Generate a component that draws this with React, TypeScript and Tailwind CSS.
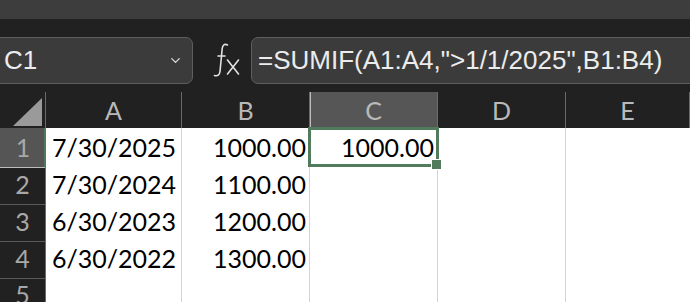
import { ChevronDown } from 'lucide-react'

const COLS = ['A', 'B', 'C', 'D', 'E']
const ROWS: [string, string, string][] = [
  ['7/30/2025', '1000.00', '1000.00'],
  ['7/30/2024', '1100.00', ''],
  ['6/30/2023', '1200.00', ''],
  ['6/30/2022', '1300.00', ''],
  ['', '', ''],
]

const GRID = 'grid grid-cols-[46px_136px_128px_128px_128px_1fr]'

function FxIcon() {
  return (
    <svg width="28" height="34" viewBox="0 0 28 34" fill="none" stroke="#e2e2e2" strokeWidth="1.6" strokeLinecap="round">
      <path d="M15.5 2 C12.5 0.5 10.6 2 10.2 5.5 L8 28.5 C7.6 32 5.5 33.5 2.5 32.5" />
      <path d="M6 13 H13" />
      <path d="M15.5 17 L26.5 31 M26.5 17 L15.5 31" />
    </svg>
  )
}

export default function App() {
  return (
    <div className="w-[690px] h-[302px] overflow-hidden bg-[#212121] flex flex-col">
      {/* Ribbon edge */}
      <div className="h-[19px] bg-[#3d3d3d] shrink-0" />

      {/* Formula bar */}
      <div className="flex items-center h-[48px] mt-[17px] shrink-0">
        <div className="ml-[-8px] w-[201px] h-[47px] rounded-[7px] border border-[#5e5e5e] bg-[#3b3b3b] flex items-center pl-[11px] pr-[9px]">
          <span className="flex-1 text-[26px] text-[#ececec] font-['Liberation_Sans',sans-serif]">C1</span>
          <ChevronDown size={15} strokeWidth={2.2} className="text-[#d8d8d8]" />
        </div>
        <div className="w-[58px] flex items-center justify-center pl-[7px] pb-[1px]">
          <FxIcon />
        </div>
        <div className="flex-1 mr-[-10px] h-[47px] rounded-[7px] border border-[#5e5e5e] bg-[#3b3b3b] flex items-center pl-[6px]">
          <span className="text-[26px] text-[#ececec] font-['Liberation_Sans',sans-serif] whitespace-nowrap">
            =SUMIF(A1:A4,"&gt;1/1/2025",B1:B4)
          </span>
        </div>
      </div>

      {/* Sheet */}
      <div className="relative mt-[8px] font-['Lato',sans-serif]">
        <div className={`${GRID} h-[36px]`}>
          <div className="border-r border-[#6a6a6a] flex items-end justify-end pr-[3px] pb-[4px]">
            <div className="w-0 h-0 border-l-[29px] border-l-transparent border-b-[28px] border-b-[#9a9a9a]" />
          </div>
          {COLS.map((c) => (
            <div
              key={c}
              className={`flex items-center justify-center text-[25px] text-[#b9b9b9] border-r ${
                c === 'C' ? 'bg-[#565656] border-[#6a6a6a] shadow-[inset_1px_0_0_#bdbdbd]' : 'border-[#6a6a6a]'
              }`}
            >
              {c}
            </div>
          ))}
        </div>

        {ROWS.map((row, i) => (
          <div key={i} className={`${GRID} h-[37px]`}>
            <div
              className={`flex items-center justify-center text-[25px] text-[#a8a8a8] border-b ${
                i === 0
                  ? 'bg-[#555555] border-[#bdbdbd] shadow-[inset_-2px_0_0_#4f7a5a]'
                  : 'border-[#5a5a5a] border-r border-r-[#6a6a6a]'
              }`}
            >
              {i + 1}
            </div>
            <div className="bg-white border-r border-b border-[#d4d4d4] flex items-center pl-[6px] pt-[1px] text-[25px] text-black">
              {row[0]}
            </div>
            <div className="bg-white border-r border-b border-[#d4d4d4] flex items-center justify-end pr-[3px] pt-[1px] text-[25px] text-black">
              {row[1]}
            </div>
            <div className="bg-white border-r border-b border-[#d4d4d4] flex items-center justify-end pr-[3px] pt-[1px] text-[25px] text-black">
              {row[2]}
            </div>
            <div className="bg-white border-r border-b border-[#d4d4d4]" />
            <div className="bg-white border-b border-[#d4d4d4]" />
          </div>
        ))}

        {/* Active cell C1 */}
        <div className="absolute left-[308px] top-[35px] w-[131px] h-[40px] border-[3px] border-[#527a5c] pointer-events-none" />
        <div className="absolute left-[432px] top-[68px] w-[9px] h-[9px] bg-[#527a5c] outline outline-1 outline-white pointer-events-none" />
      </div>
    </div>
  )
}
